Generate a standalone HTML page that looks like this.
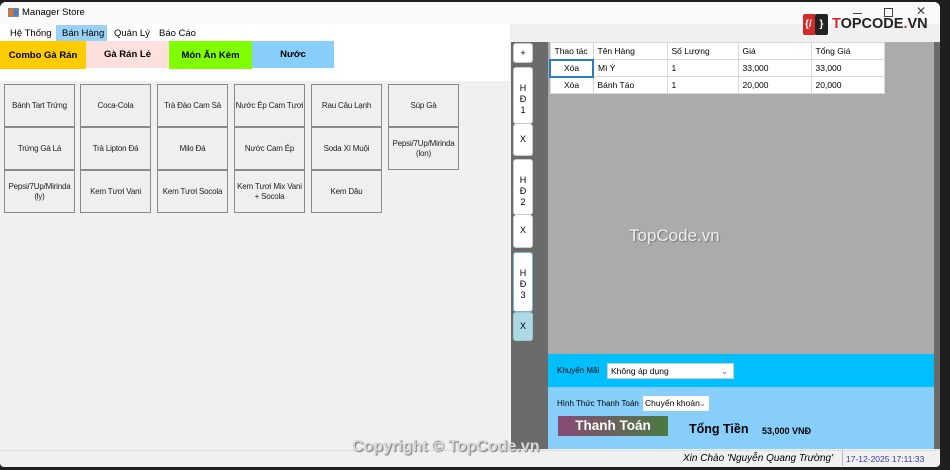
<!DOCTYPE html>
<html><head><meta charset="utf-8"><style>
*{box-sizing:border-box;margin:0;padding:0}
body{width:950px;height:470px;background:#1f1f1f;font-family:"Liberation Sans","Noto Sans CJK SC",sans-serif;font-size:9px;color:#000;position:relative;overflow:hidden}
.a{position:absolute}
.win{left:0;top:2px;width:940px;height:465px;background:#f0f0f0;border-radius:6px 6px 4px 4px;overflow:hidden}
.btn{position:absolute;width:71px;height:43px;border:1px solid #8a8a8a;background:#efefef;display:flex;align-items:center;justify-content:center;text-align:center;font-size:8px;letter-spacing:-0.2px;line-height:10px;color:#222;white-space:nowrap}
.cat{position:absolute;top:41px;height:27px;display:flex;align-items:center;justify-content:center;font-weight:bold;font-size:9.5px}
td,th{border:1px solid #d8d8d8;height:17px;font-weight:normal;text-align:left;padding-left:4px;font-size:8.5px;background:#fff}
.tab{position:absolute;left:513px;width:20px;background:#fff;border:1px solid #ccc;border-radius:3px;text-align:center;font-size:9px;line-height:11px}
</style></head><body>
<div class="a win">
 <div class="a" style="left:0;top:0;width:940px;height:22px;background:#fafafa"></div>
 <div class="a" style="left:8px;top:6px;width:11px;height:9px;background:linear-gradient(90deg,#e07030 50%,#4a80c8 50%);border:1px solid #888"></div>
 <div class="a" style="left:22px;top:5px;font-size:9.5px">Manager Store</div>
 <div class="a" style="left:853px;top:2px;width:9px;height:1px;background:#444;top:11px"></div>
 <div class="a" style="left:884px;top:6px;width:9px;height:9px;border:1px solid #444"></div>
 <div class="a" style="left:916px;top:2px;font-size:12px;color:#444">✕</div>
 <div class="a" style="left:803px;top:12px;width:13px;height:21px;background:#d42a2a;border-radius:2px"></div>
 <div class="a" style="left:815px;top:12px;width:13px;height:21px;background:#222;border-radius:2px;color:#fff;font-weight:bold;font-size:10px;line-height:21px;text-align:center">}</div>
 <div class="a" style="left:805px;top:12px;color:#fff;font-weight:bold;font-size:10px;line-height:21px">{/</div>
 <div class="a" style="left:832px;top:14px;font-weight:bold;font-size:14.5px;color:#222;letter-spacing:0"><span style="color:#d42a2a">T</span>OPCODE<span style="color:#d42a2a">.</span>VN</div>
 <div class="a" style="left:0;top:22px;width:510px;height:17px;background:#fff"></div>
 <div class="a" style="left:10px;top:26px;font-size:9.5px">Hệ Thống</div>
 <div class="a" style="left:56px;top:23px;width:51px;height:16px;background:#99d1f5"></div>
 <div class="a" style="left:62px;top:26px;font-size:9.5px">Bán Hàng</div>
 <div class="a" style="left:114px;top:26px;font-size:9.5px">Quản Lý</div>
 <div class="a" style="left:159px;top:26px;font-size:9.5px">Báo Cáo</div>
 <div class="a" style="left:0;top:39px;width:510px;height:40px;background:#fff"></div>
 <div class="cat" style="left:0;width:86px;background:#ffcc00;top:39px;height:28px">Combo Gà Rán</div>
 <div class="cat" style="left:86px;width:83px;background:#ffe0dc;top:39px">Gà Rán Lẻ</div>
 <div class="cat" style="left:169px;width:83px;background:#80ff00;top:39px;height:28px">Món Ăn Kèm</div>
 <div class="cat" style="left:252px;width:82px;background:#87cefa;top:39px">Nước</div>
 <div class="btn" style="left:4px;top:82px">Bánh Tart Trứng</div>
 <div class="btn" style="left:80px;top:82px">Coca-Cola</div>
 <div class="btn" style="left:157px;top:82px">Trà Đào Cam Sả</div>
 <div class="btn" style="left:234px;top:82px">Nước Ép Cam Tươi</div>
 <div class="btn" style="left:311px;top:82px">Rau Câu Lạnh</div>
 <div class="btn" style="left:388px;top:82px">Súp Gà</div>
 <div class="btn" style="left:4px;top:125px">Trứng Gà Lá</div>
 <div class="btn" style="left:80px;top:125px">Trà Lipton Đá</div>
 <div class="btn" style="left:157px;top:125px">Milo Đá</div>
 <div class="btn" style="left:234px;top:125px">Nước Cam Ép</div>
 <div class="btn" style="left:311px;top:125px">Soda Xí Muội</div>
 <div class="btn" style="left:388px;top:125px">Pepsi/7Up/Mirinda<br>(lon)</div>
 <div class="btn" style="left:4px;top:168px">Pepsi/7Up/Mirinda<br>(ly)</div>
 <div class="btn" style="left:80px;top:168px">Kem Tươi Vani</div>
 <div class="btn" style="left:157px;top:168px">Kem Tươi Socola</div>
 <div class="btn" style="left:234px;top:168px">Kem Tươi Mix Vani<br>+ Socola</div>
 <div class="btn" style="left:311px;top:168px">Kem Dâu</div>
 <div class="a" style="left:0;top:448px;width:940px;height:1px;background:#dcdcdc"></div>
 <div class="a" style="left:511px;top:40px;width:429px;height:407px;background:#6b6b6b"></div>
 <div class="tab" style="top:41px;height:20px;line-height:18px">+</div>
 <div class="tab" style="top:65px;height:57px;padding-top:15px">H<br>Đ<br>1</div>
 <div class="tab" style="top:122px;height:32px;line-height:30px;border-top:none">X</div>
 <div class="tab" style="top:157px;height:56px;padding-top:15px">H<br>Đ<br>2</div>
 <div class="tab" style="top:213px;height:33px;line-height:31px;border-top:none">X</div>
 <div class="tab" style="top:250px;height:60px;padding-top:15px;border-color:#7ab8dd">H<br>Đ<br>3</div>
 <div class="tab" style="top:310px;height:29px;line-height:27px;background:#add8e6;border-color:#9cc">X</div>
 <div class="a" style="left:548px;top:40px;width:386px;height:312px;background:#ababab"></div>
 <table class="a" style="left:549px;top:40px;border-collapse:collapse">
  <tr><th style="width:43px">Thao tác</th><th style="width:74px">Tên Hàng</th><th style="width:71px">Số Lượng</th><th style="width:73px">Giá</th><th style="width:73px">Tổng Giá</th></tr>
  <tr><td style="text-align:center;padding:0;border:2px solid #2a7bc8">Xóa</td><td>Mì Ý</td><td>1</td><td>33,000</td><td>33,000</td></tr>
  <tr><td style="text-align:center;padding:0">Xóa</td><td>Bánh Táo</td><td>1</td><td>20,000</td><td>20,000</td></tr>
 </table>
 <div class="a" style="left:629px;top:224px;font-size:17px;color:#eee;text-shadow:1px 1px 1px #777">TopCode.vn</div>
 <div class="a" style="left:548px;top:352px;width:386px;height:33px;background:#00bfff"></div>
 <div class="a" style="left:557px;top:364px;font-size:8px">Khuyến Mãi</div>
 <div class="a" style="left:607px;top:361px;width:127px;height:16px;background:#fff;border:1px solid #ccc;padding:2px 3px;font-size:8.5px">Không áp dụng<span style="position:absolute;right:5px;color:#666">⌄</span></div>
 <div class="a" style="left:548px;top:385px;width:386px;height:62px;background:#87cefa"></div>
 <div class="a" style="left:557px;top:397px;font-size:8px">Hình Thức Thanh Toán</div>
 <div class="a" style="left:643px;top:394px;width:66px;height:15px;background:#fff;padding:2px 2px;font-size:8.5px;white-space:nowrap;overflow:hidden">Chuyển khoản<span style="position:absolute;right:3px;color:#666">⌄</span></div>
 <div class="a" style="left:558px;top:414px;width:110px;height:20px;background:linear-gradient(90deg,#8a4a78,#4a7a40);color:#fff;font-weight:bold;font-size:13.5px;text-align:center;line-height:20px">Thanh Toán</div>
 <div class="a" style="left:689px;top:420px;font-weight:bold;font-size:12.5px">Tổng Tiền</div>
 <div class="a" style="left:762px;top:424px;font-weight:bold;font-size:9px">53,000 VNĐ</div>
 <div class="a" style="left:683px;top:451px;font-style:italic;font-size:10px">Xin Chào 'Nguyễn Quang Trường'</div>
 <div class="a" style="left:842px;top:449px;width:1px;height:15px;background:#bbb"></div>
 <div class="a" style="left:846px;top:452px;font-size:8.5px;color:#3a3aa0">17-12-2025 17:11:33</div>
 <div class="a" style="left:352px;top:436px;font-size:16px;font-weight:bold;color:#d8d8d8;text-shadow:1px 1px 1px #777">Copyright © TopCode.vn</div>
</div>
</body></html>
